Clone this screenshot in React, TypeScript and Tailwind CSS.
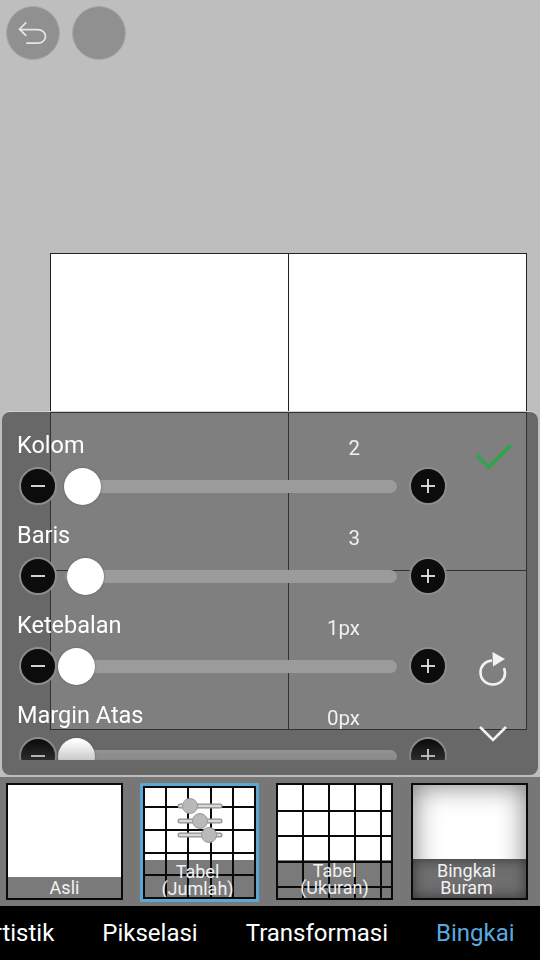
import React from 'react';

const font = { fontFamily: 'Roboto, "Noto Sans", sans-serif' };

const rows = [
    { label: 'Kolom', value: '2', thumb: -1 },
    { label: 'Baris', value: '3', thumb: 2 },
    { label: 'Ketebalan', value: '1px', thumb: -7 },
    { label: 'Margin Atas', value: '0px', thumb: -7 },
];

const RoundButton = ({ sign }: { sign: 'minus' | 'plus' }) => (
    <div className="w-[38px] h-[38px] rounded-full bg-[#0c0c0c] border-2 border-[#8d8d8d] flex items-center justify-center shrink-0">
        <svg width="20" height="20" viewBox="0 0 20 20" stroke="#e8e8e8" strokeWidth="1.8">
            <path d="M3 10H17" />
            {sign === 'plus' && <path d="M10 3V17" />}
        </svg>
    </div>
);

const SliderRow = ({ label, value, thumb }: { label: string; value: string; thumb: number }) => (
    <div className="h-[90px] pl-[15px]">
        <div className="flex justify-between w-[343px] h-[48px] pt-[13px]">
            <span className="text-[23.5px] leading-[28px] text-white">{label}</span>
            <span className="text-[20.5px] leading-[28px] text-[#f0f0f0] mt-[3px]">{value}</span>
        </div>
        <div className="flex items-center ml-[2px] w-[428px] h-[38px] mt-[1px]">
            <RoundButton sign="minus" />
            <div className="relative flex-1 h-[13px] ml-[8px] mr-[12px] rounded-full bg-[#9b9b9b]">
                <div className="absolute top-[-12px] w-[37px] h-[37px] rounded-full bg-white shadow-[0_0_2px_#555]" style={{ left: thumb }} />
            </div>
            <RoundButton sign="plus" />
        </div>
    </div>
);

const Thumb = ({ label, band, selected, children, labelClass }: {
    label: string[]; band: number; selected?: boolean; children?: React.ReactNode; labelClass?: string;
}) => (
    <div className={`relative shrink-0 overflow-hidden bg-white ${selected ? 'w-[119px] h-[119px] mx-[-1px] border-[3px] border-[#5ba6d3]' : 'w-[117px] h-[117px] border-2 border-[#0a0a0a]'}`}>
        <div className="absolute inset-x-0 bottom-0 bg-[#7a7a7a]" style={{ height: band }} />
        {children}
        <div className={`absolute inset-x-0 bottom-0 flex flex-col items-center justify-end text-[18px] leading-[17px] text-[#f2f2f2] pb-[2px] ${labelClass ?? ''}`} style={{ height: band }}>
            {label.map((l) => <span key={l}>{l}</span>)}
        </div>
        {selected && <div className="absolute inset-0 border-2 border-[#0a0a0a]" />}
    </div>
);

const GridLines = ({ xs, ys, width = 2 }: { xs: number[]; ys: number[]; width?: number }) => (
    <svg className="absolute inset-0" width="113" height="113" viewBox="0 0 113 113" stroke="#0a0a0a" strokeWidth={width}>
        {xs.map((x) => <path key={x} d={`M${x} 0V113`} />)}
        {ys.map((y) => <path key={y} d={`M0 ${y}H113`} />)}
    </svg>
);

export default function App() {
    return (
        <div className="w-[540px] h-[960px] overflow-hidden flex flex-col bg-[#bebebe]" style={font}>
            <div className="relative h-[777px]">
                <div className="flex gap-[12px] p-[6px]">
                    <div className="w-[54px] h-[54px] rounded-full bg-[#909090] border border-[#a8a8a8] flex items-center justify-center">
                        <svg width="54" height="54" viewBox="0 0 54 54" fill="none" stroke="#e6e6e6" strokeWidth="1.8">
                            <path d="M20 16L13 23L20 30" />
                            <path d="M13 23.5H32C36 23.5 40 26 40 30.5C40 35 36 37.5 32 37.5H20" />
                        </svg>
                    </div>
                    <div className="w-[54px] h-[54px] rounded-full bg-[#909090] border border-[#a8a8a8]" />
                </div>

                <div className="ml-[50px] mt-[187px] w-[477px] h-[477px] grid grid-cols-2 grid-rows-3 gap-px bg-[#222] border border-[#222]">
                    {[0, 1, 2, 3, 4, 5].map((i) => <div key={i} className="bg-white" />)}
                </div>

                <div className="absolute left-[2px] top-[412px] w-[536px] h-[363px] rounded-[8px] bg-[#3a3a3a]/65 shadow-[0_-1px_0_#d0d0d0] flex">
                    <div className="w-[460px] h-[348px] overflow-hidden pt-[6px] [mask-image:linear-gradient(to_bottom,black_328px,rgba(0,0,0,0.65)_348px)]">
                        {rows.map((r) => <SliderRow key={r.label} {...r} />)}
                    </div>
                    <div className="flex-1 flex flex-col items-center pr-[15px]">
                        <svg className="mt-[28px] ml-[3px]" width="42" height="32" viewBox="0 0 42 32" fill="none" stroke="#2ea549" strokeWidth="3.5">
                            <path d="M4 15.5L16 27L38 5" />
                        </svg>
                        <svg className="mt-[179px]" width="40" height="40" viewBox="0 0 40 40" fill="none">
                            <path d="M19 9.5C12 10 7.5 15 7.5 21.5C7.5 28.5 13 33.5 20 33.5C27 33.5 32 28.5 32 22C32 20 31.5 18.500 31 17" stroke="#f2f2f2" strokeWidth="2.6" />
                            <path d="M19.500 1L32 8L20 15.500Z" fill="#f2f2f2" />
                        </svg>
                        <svg className="mt-[33px] ml-[1px]" width="32" height="20" viewBox="0 0 32 20" fill="none" stroke="#f2f2f2" strokeWidth="2.6">
                            <path d="M3 3L16 16L29 3" />
                        </svg>
                    </div>
                </div>
            </div>

            <div className="h-[129px] bg-[#777777] flex gap-[18px] pl-[6px] pt-[6px]">
                <Thumb label={['Asli']} band={21} />
                <Thumb label={['Tabel', '(Jumlah)']} band={39} selected labelClass="pr-[4px]">
                    <GridLines xs={[23, 45, 68, 90]} ys={[21, 44, 67, 89]} />
                    <svg className="absolute inset-0" width="113" height="113" viewBox="0 0 113 113">
                        {[{ y: 20, x: 47 }, { y: 35, x: 57 }, { y: 49, x: 66 }].map((k) => (
                            <g key={k.y}>
                                <path d={`M37 ${k.y}H77`} stroke="#8e8e8e" strokeWidth="5" strokeLinecap="round" />
                                <path d={`M37 ${k.y}H77`} stroke="#d8d8d8" strokeWidth="2.500" strokeLinecap="round" />
                                <circle cx={k.x} cy={k.y} r="7.500" fill="#b9b9b9" stroke="#999999" />
                            </g>
                        ))}
                    </svg>
                </Thumb>
                <Thumb label={['Tabel', '(Ukuran)']} band={38}>
                    <GridLines xs={[25, 51, 77, 103]} ys={[26, 51, 77, 102]} />
                </Thumb>
                <Thumb label={['Bingkai', 'Buram']} band={39} labelClass="pr-[6px]">
                    <div className="absolute inset-0 shadow-[inset_0_0_28px_#777]" />
                    <div className="absolute inset-x-0 bottom-0 h-[39px] bg-[#6f6f6f] shadow-[inset_0_0_14px_#333]" />
                </Thumb>
            </div>

            <div className="h-[54px] bg-black flex items-center gap-[48px] ml-[-22px] text-[24px] text-white whitespace-nowrap w-[600px]">
                <span>Artistik</span>
                <span>Pikselasi</span>
                <span>Transformasi</span>
                <span className="text-[#5aa9de]">Bingkai</span>
            </div>
        </div>
    );
}
